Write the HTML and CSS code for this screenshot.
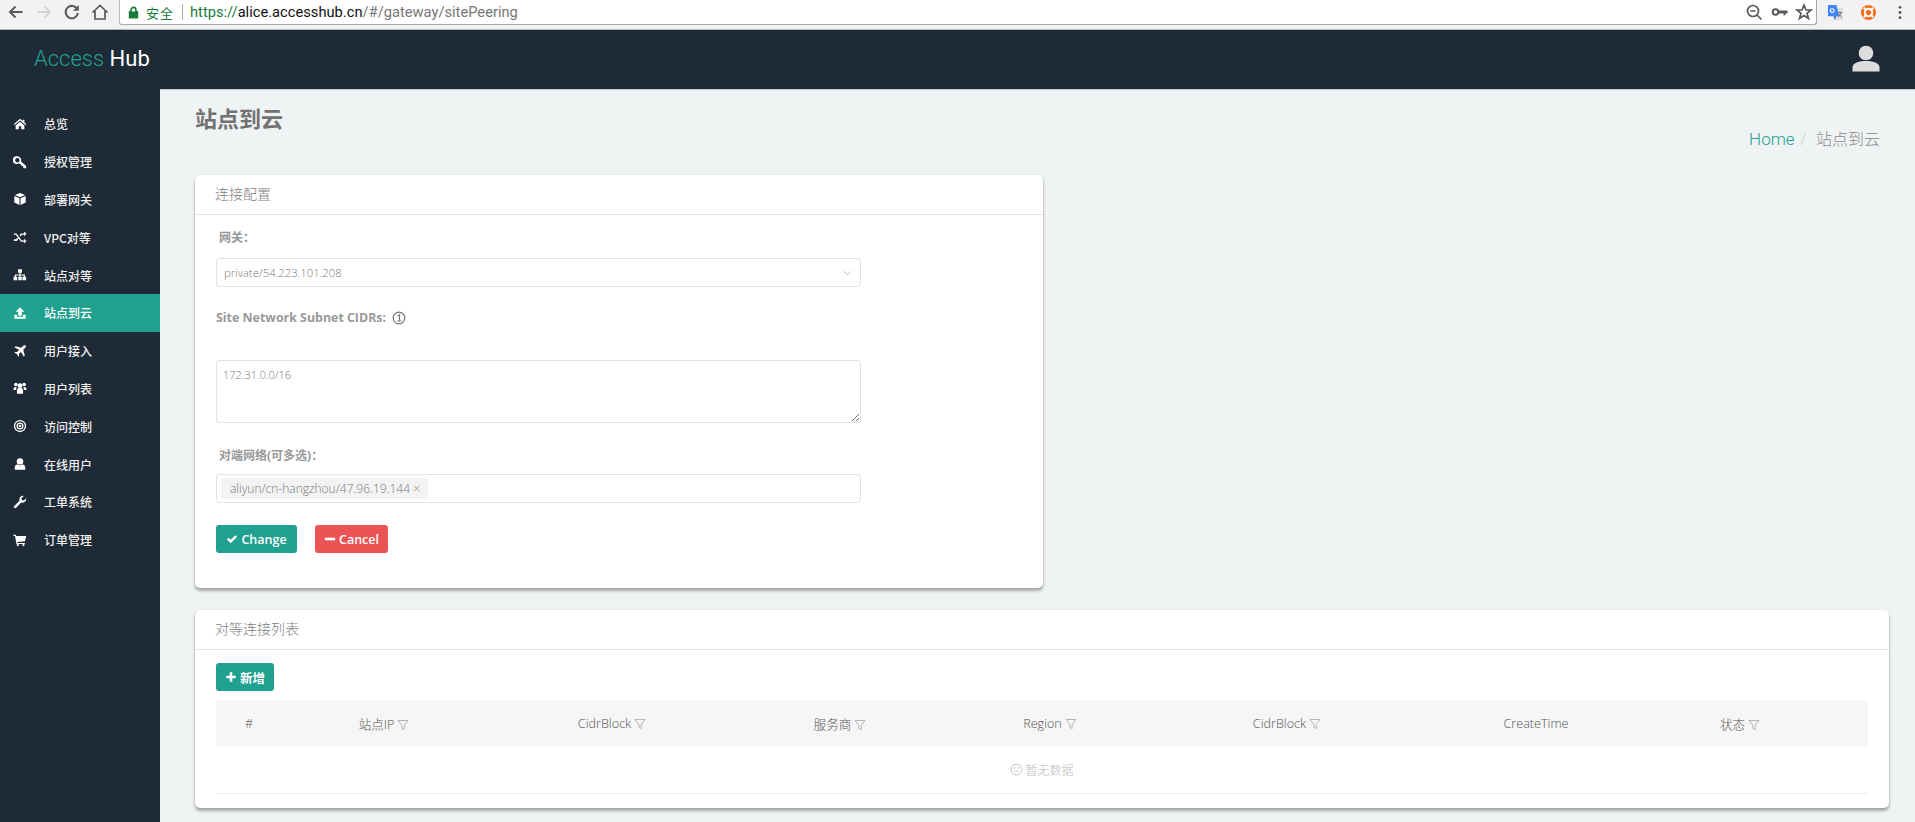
FILE: index.html
```html
<!DOCTYPE html>
<html lang="zh-CN">
<head>
<meta charset="utf-8">
<title>Access Hub</title>
<link rel="stylesheet" href="styles.css">
</head>
<body>
<svg class="defs" width="0" height="0">
  <defs>
    <symbol id="i-home" viewBox="0 0 16 16"><path d="M8 2 0.8 8.2l1 1L8 4l6.200 5.200 1-1L13 6.300V3h-2v1.600zM3 9.600V14h3.600v-3.400h2.800V14H13V9.600L8 5.300z"/></symbol>
    <symbol id="i-key" viewBox="0 0 16 16"><path fill-rule="evenodd" d="M5 1.500a4.500 4.500 0 0 1 4.200 5.800l5.800 5.200V15h-2.500l-1-1v-1.300h-1.300L9 11.500V10.300H7.800L6.800 9.400A4.500 4.500 0 1 1 5 1.500zM5 3.500a2.500 2.500 0 1 0 0 5 2.500 2.500 0 0 0 0-5z"/></symbol>
    <symbol id="i-cube" viewBox="0 0 16 16"><path d="M8 1.200 13.800 3.500 8 5.900 2.200 3.500zM1.500 4.700 7.400 7.100V14.800L1.500 12zM14.500 4.700 8.600 7.100V14.800L14.500 12z"/></symbol>
    <symbol id="i-random" viewBox="0 0 16 16"><path d="M1 4h3l6 8h2.500v-2l3 2.700-3 2.700v-2H9.200l-6-8H1zM1 10.500h2.500l1.600-2 1.200 1.500L4.300 12.500H1zM9.200 4h3.300V1.700l3 2.700-3 2.700V5.500h-2.500L8.600 7.300 7.500 5.800z"/></symbol>
    <symbol id="i-sitemap" viewBox="0 0 16 16"><path d="M5.800 1.500h4.400v4H8.600v1.800h5v2.700h1.400v4h-4.200v-4h1.400V8.500H8.600V10H10v4H6v-4h1.400V8.500H3.400V10h1.400v4H.6v-4H2V7.300h5.400V5.500H5.800z"/></symbol>
    <symbol id="i-upload" viewBox="0 0 16 16"><path d="M8 1.500 13 6.500H10v4.500H6V6.500H3zM1.500 10h3v2.300h7V10h3v4.500h-13z"/></symbol>
    <symbol id="i-plane" viewBox="0 0 16 16"><path d="M14.500 1.500c-1-.5-2.200 0-3 .8L9.500 4.300 3 2.500 1.700 3.800 7 6.800 4.600 9.200 2.500 9 1.500 10l3 1.500L6 14.500l1-1-.2-2.100 2.400-2.400 3 5.300 1.300-1.300-1.800-6.500 2-2c.8-.8 1.300-2 .8-3z"/></symbol>
    <symbol id="i-users" viewBox="0 0 16 16"><circle cx="3.300" cy="4" r="2"/><circle cx="12.700" cy="4" r="2"/><circle cx="8" cy="5.500" r="2.800"/><path d="M.5 10c0-2 .8-3.200 2.500-3.200l1.300.5c-.5.700-.7 1.700-.7 3H.5zM15.500 10c0-2-.8-3.200-2.500-3.200l-1.300.5c.5.700.7 1.700.7 3h3.100zM4.500 14.500v-3c0-2 1-3.500 2-3.500h3c1 0 2 1.500 2 3.500v3z"/></symbol>
    <symbol id="i-bullseye" viewBox="0 0 16 16"><path fill-rule="evenodd" d="M8 1a7 7 0 1 1 0 14A7 7 0 0 1 8 1zm0 1.500a5.500 5.500 0 1 0 0 11 5.500 5.500 0 0 0 0-11zM8 4a4 4 0 1 1 0 8 4 4 0 0 1 0-8zm0 1.500a2.500 2.500 0 1 0 0 5 2.500 2.500 0 0 0 0-5zM8 6.500a1.500 1.500 0 1 1 0 3 1.500 1.500 0 0 1 0-3z"/></symbol>
    <symbol id="i-user" viewBox="0 0 16 16"><circle cx="8" cy="5" r="3.700"/><path d="M2 14.500v-2.300c0-2 1-3.500 3-3.700 1.800 1.200 4.200 1.200 6 0 2 .2 3 1.700 3 3.700v2.300z"/></symbol>
    <symbol id="i-wrench" viewBox="0 0 16 16"><path d="M15 3.800a4.300 4.300 0 0 1-5.600 4.700L3.600 14.600a1.500 1.500 0 0 1-2.200-2.100l6-6A4.300 4.300 0 0 1 12.300 1L9.700 3.600 10.200 5.800 12.400 6.300z"/></symbol>
    <symbol id="i-cart" viewBox="0 0 16 16"><path d="M.5 2h2.800l.4 1.500H15l-1.300 5.800L5 10.300l.2 1h8.300v1.300H4L2.300 3.400H.5z"/><circle cx="5.500" cy="13.800" r="1.300"/><circle cx="12" cy="13.800" r="1.300"/></symbol>
    <symbol id="i-filter" viewBox="0 0 12 12"><path d="M1 1.500h10L7.200 6.300V10.500L4.800 9.300V6.300z" fill="none" stroke="currentColor" stroke-width="1"/></symbol>
  </defs>
</svg>

<header class="chrome">
  <div class="nav-btns">
    <svg class="ci" viewBox="0 0 18 18"><path class="st dark" d="M15.500 9H3.500M8.500 3.500 3 9l5.500 5.500"/></svg>
    <svg class="ci" viewBox="0 0 18 18"><path class="st faint" d="M2.500 9h12M9.500 3.500 15 9l-5.500 5.500"/></svg>
    <svg class="ci" viewBox="0 0 18 18"><path class="st dark" d="M14.500 6.500A6.200 6.200 0 1 0 15 10"/><path class="dark-f" d="M15.800 2v5.800H10z"/></svg>
    <svg class="ci" viewBox="0 0 18 18"><path class="st dark thin" d="M1.500 9.500 9 2.500l7.500 7M4 8v8h10V8"/></svg>
  </div>
  <div class="omnibox">
    <svg class="lock" viewBox="0 0 12 14"><path d="M1.500 6h9v7h-9zM3.200 6V4a2.800 2.800 0 0 1 5.600 0v2" fill="#1a7d3c" stroke="#1a7d3c" stroke-width="1.300"/><path d="M4.300 6V4a1.700 1.700 0 0 1 3.400 0v2z" fill="#fff"/></svg>
    <span class="secure">安全</span>
    <span class="omni-sep"></span>
    <span class="url"><span class="url-s">https://</span><span class="url-h">alice.accesshub.cn</span><span class="url-p">/#/gateway/sitePeering</span></span>
    <div class="omni-right">
      <svg class="ci" viewBox="0 0 18 18"><circle class="st dark thin" cx="8" cy="8" r="5.500"/><path class="st dark thin" d="M12 12l4.500 4.500M5.300 8h5.400"/></svg>
      <svg class="ci" viewBox="0 0 18 18"><circle class="st dark" cx="5.500" cy="9" r="2.800"/><path class="dark-f" d="M8 7.500h9.500v3h-2v1.800h-2v-1.800H8z"/></svg>
      <svg class="ci" viewBox="0 0 18 18"><path class="st dark thin" d="M9 2.200 11 7h5l-4 3.300 1.500 5.200L9 12.600l-4.500 2.900L6 10.300 2 7h5z"/></svg>
    </div>
  </div>
  <div class="ext">
    <svg class="ext-i" viewBox="0 0 18 18"><path d="M7 4h10v13H7z" fill="#ddd"/><path d="M1 1h9l3 12H1z" fill="#4285f4"/><path d="M7 13l3 0-1.800 4z" fill="#3367d6"/><circle cx="5.500" cy="7" r="2" fill="none" stroke="#fff" stroke-width="1.200"/><path d="M11 9h5M13.500 8v1M12 14l3-5M12.500 10l3 4" stroke="#777" fill="none"/></svg>
    <svg class="ext-i" viewBox="0 0 18 18"><circle cx="9" cy="9" r="8" fill="#f26f21"/><circle cx="9" cy="9" r="4" fill="none" stroke="#fff" stroke-width="2"/><path d="M4 4l3 3M14 4l-3 3M4 14l3-3M14 14l-3-3" stroke="#fff" stroke-width="2"/></svg>
    <svg class="dots" viewBox="0 0 4 16"><circle cx="2" cy="2.500" r="1.500"/><circle cx="2" cy="8" r="1.500"/><circle cx="2" cy="13.500" r="1.500"/></svg>
  </div>
</header>

<header class="topbar">
  <div class="logo"><span class="logo-a">Access</span> <span class="logo-b">Hub</span></div>
  <svg class="avatar" viewBox="0 0 28 26"><circle cx="14" cy="7.500" r="7.300"/><path d="M.5 26v-4c0-4 5-6.500 13.500-6.500S27.500 18 27.500 22v4z"/></svg>
</header>

<div class="shell">
  <nav class="side">
    <a class="side-item"><svg class="si"><use href="#i-home"/></svg><span>总览</span></a>
    <a class="side-item"><svg class="si"><use href="#i-key"/></svg><span>授权管理</span></a>
    <a class="side-item"><svg class="si"><use href="#i-cube"/></svg><span>部署网关</span></a>
    <a class="side-item"><svg class="si"><use href="#i-random"/></svg><span>VPC对等</span></a>
    <a class="side-item"><svg class="si"><use href="#i-sitemap"/></svg><span>站点对等</span></a>
    <a class="side-item active"><svg class="si"><use href="#i-upload"/></svg><span>站点到云</span></a>
    <a class="side-item"><svg class="si"><use href="#i-plane"/></svg><span>用户接入</span></a>
    <a class="side-item"><svg class="si"><use href="#i-users"/></svg><span>用户列表</span></a>
    <a class="side-item"><svg class="si"><use href="#i-bullseye"/></svg><span>访问控制</span></a>
    <a class="side-item"><svg class="si"><use href="#i-user"/></svg><span>在线用户</span></a>
    <a class="side-item"><svg class="si"><use href="#i-wrench"/></svg><span>工单系统</span></a>
    <a class="side-item"><svg class="si"><use href="#i-cart"/></svg><span>订单管理</span></a>
  </nav>

  <main class="main">
    <div class="page-head">
      <h1 class="title">站点到云</h1>
      <div class="crumbs"><a class="crumb-home">Home</a><span class="crumb-sep">/</span><span class="crumb-cur">站点到云</span></div>
    </div>

    <section class="card card-form">
      <div class="card-head">连接配置</div>
      <div class="card-body form-body">
        <div class="label label-a">网关：</div>
        <div class="field select">
          <span>private/54.223.101.208</span>
          <svg class="chev" viewBox="0 0 10 6"><path d="M1 1l4 4 4-4" fill="none" stroke="#bbb"/></svg>
        </div>
        <div class="label label-b">Site Network Subnet CIDRs:
          <svg class="info" viewBox="0 0 14 14"><circle cx="7" cy="7" r="5.800" fill="none" stroke="#777" stroke-width="1.200"/><path d="M5.700 4.700 7.500 3.800V10M5.500 10h4" fill="none" stroke="#777" stroke-width="1.200"/></svg>
        </div>
        <textarea class="field area" readonly>172.31.0.0/16</textarea>
        <div class="label label-c">对端网络(可多选)：</div>
        <div class="field multi"><span class="tag">aliyun/cn-hangzhou/47.96.19.144 <span class="tag-x">×</span></span></div>
        <div class="actions">
          <button class="btn btn-teal btn-change"><svg class="bi" viewBox="0 0 14 14"><path d="M1 7.500 3 5.500l2.500 2.500 5.500-5.500 2 2-7.500 7.500z"/></svg>Change</button>
          <button class="btn btn-red"><svg class="bi" viewBox="0 0 14 14"><path d="M1 5.500h12v3H1z"/></svg>Cancel</button>
        </div>
      </div>
    </section>

    <section class="card card-list">
      <div class="card-head">对等连接列表</div>
      <div class="card-body list-body">
        <button class="btn btn-teal btn-add"><svg class="bi" viewBox="0 0 14 14"><path d="M5.500 1.500h3v4h4v3h-4v4h-3v-4h-4v-3h4z"/></svg>新增</button>
        <div class="thead">
          <div>#</div>
          <div>站点IP<svg class="fi"><use href="#i-filter"/></svg></div>
          <div>CidrBlock<svg class="fi"><use href="#i-filter"/></svg></div>
          <div>服务商<svg class="fi"><use href="#i-filter"/></svg></div>
          <div>Region<svg class="fi"><use href="#i-filter"/></svg></div>
          <div>CidrBlock<svg class="fi"><use href="#i-filter"/></svg></div>
          <div>CreateTime</div>
          <div>状态<svg class="fi"><use href="#i-filter"/></svg></div>
          <div></div>
        </div>
        <div class="empty">
          <svg class="sad" viewBox="0 0 14 14"><circle cx="7" cy="7" r="5.800" fill="none" stroke="#bbb"/><circle cx="5" cy="5.500" r=".8" fill="#bbb"/><circle cx="9" cy="5.500" r=".8" fill="#bbb"/><path d="M4.800 9.800a2.500 2.500 0 0 1 4.400 0" fill="none" stroke="#bbb"/></svg>暂无数据
        </div>
      </div>
    </section>
  </main>
</div>
</body>
</html>
```

FILE: styles.css
```css
* { box-sizing: border-box; }
html, body { margin: 0; height: 100%; overflow: hidden; }
body {
  display: flex;
  flex-direction: column;
  background: #eff3f4;
  font-family: "Open Sans", "Noto Sans CJK SC", sans-serif;
  font-size: 12px;
  color: #777;
}
.defs { position: absolute; }

/* browser chrome */
.chrome {
  height: 30px;
  display: flex;
  background: #f2f2f2;
  border-bottom: 1px solid #b4b4b4;
  flex: none;
}
.nav-btns {
  width: 119px;
  display: flex;
  gap: 10px;
  padding: 3px 0 0 7px;
}
.ci { width: 18px; height: 18px; flex: none; }
.st { fill: none; stroke-width: 2; }
.dark { stroke: #5a5a5a; }
.thin { stroke-width: 1.700; }
.faint { stroke: #d4d4d4; }
.dark-f { fill: #5a5a5a; }
.omnibox {
  width: 1698px;
  height: 25px;
  background: #fff;
  border: 1px solid #a9a9a9;
  border-top: 0;
  border-left-color: #bbb;
  border-radius: 0 0 3px 3px;
  display: flex;
  align-items: center;
  padding-left: 8px;
}
.lock { width: 11px; height: 13px; }
.secure {
  margin-left: 7px;
  font-size: 13px;
  letter-spacing: 1px;
  color: #1a7d3c;
}
.omni-sep { width: 1px; height: 16px; background: #aaa; margin: 0 7px 0 8px; }
.url { font-family: Roboto, sans-serif; font-size: 14.700px; }
.url-s { color: #1a7d3c; }
.url-h { color: #111; }
.url-p { color: #777; }
.omni-right {
  margin-left: auto;
  display: flex;
  gap: 7px;
  padding-right: 3px;
}
.ext {
  flex: 1;
  display: flex;
  align-items: center;
  padding: 0 0 5px 10px;
}
.ext-i { width: 17px; height: 17px; margin-right: 15px; }
.ext-i + .ext-i { margin-left: 1px; margin-right: 21px; }
.dots { width: 4px; height: 15px; fill: #5a5a5a; }

/* top bar */
.topbar {
  height: 59px;
  flex: none;
  background: #1e2b37;
  display: flex;
  align-items: center;
  justify-content: space-between;
  padding: 0 35px 2px 34px;
}
.logo { font-family: Roboto, sans-serif; font-size: 22px; }
.logo-a { color: #20a08f; font-weight: 300; }
.logo-b { color: #fff; }
.avatar { width: 28px; height: 27px; fill: #ddd; }

/* layout */
.shell { flex: 1; display: flex; min-height: 0; }
.side {
  width: 160px;
  flex: none;
  background: #1e2b37;
  padding-top: 16px;
}
.side-item {
  height: 37.800px;
  display: flex;
  align-items: center;
  color: #eee;
  font-family: "Noto Sans CJK SC", "Open Sans", sans-serif;
  font-weight: 500;
  padding-left: 13px;
}
.side-item.active { background: #20a08f; color: #fff; }
.si { width: 14px; height: 14px; fill: #fff; margin-right: 17px; flex: none; }

.main { flex: 1; min-width: 0; padding: 0 26px 0 35px; border-top: 1px solid #c9cdd0; }
.page-head {
  height: 85px;
  display: flex;
  justify-content: space-between;
  align-items: flex-start;
}
.title {
  margin: 13px 0 0;
  font-size: 22px;
  line-height: 30px;
  font-weight: 700;
  color: #727272;
}
.crumbs {
  margin: 37px 9px 0 0;
  display: flex;
  align-items: center;
  line-height: 24px;
  font-size: 16px;
  color: #8a8a8a;
  font-weight: 300;
}
.crumb-home { font-family: Roboto, sans-serif; font-size: 17px; font-weight: 300; color: #20a08f; }
.crumb-sep { margin: 0 10px 0 6px; color: #ccc; }

/* cards */
.card {
  background: #fff;
  border-radius: 5px;
  box-shadow: 0 3px 3px rgba(0, 0, 0, .3), -1px 0 2px rgba(0, 0, 0, .06), 1px 0 2px rgba(0, 0, 0, .06);
}
.card-form { width: 848px; }
.card-list { margin-top: 22px; }
.card-head {
  height: 40px;
  border-bottom: 1px solid #e2e2e2;
  padding-left: 20px;
  font-size: 14px;
  line-height: 38px;
  color: #808080;
  font-weight: 300;
}
.card-body { padding: 0 21px; }
.form-body { padding-bottom: 35px; }
.list-body { padding-bottom: 14px; }

.label {
  line-height: 20px;
  font-weight: 600;
  color: #999;
  display: flex;
  align-items: center;
}
.label-a { margin: 13px 0 10px 3px; }
.label-b { margin: 21px 0 32px; font-size: 12.400px; font-weight: 700; }
.label-c { margin: 23px 0 8px 3px; font-weight: 700; }
.info { width: 14px; height: 14px; margin-left: 6px; }

.field {
  display: block;
  width: 645px;
  background: #fff;
  border: 1px solid #e2e2e2;
  border-radius: 3px;
  font-family: "Open Sans", sans-serif;
  font-size: 12px;
  font-weight: 300;
  color: #777;
}
.select {
  height: 29px;
  display: flex;
  align-items: center;
  justify-content: space-between;
  padding: 0 8px 0 7px;
  font-size: 11.300px;
}
.chev { width: 9px; height: 6px; }
.area {
  height: 63px;
  padding: 5px 6px;
  margin: 0;
  outline: 0;
  line-height: 17px;
  resize: vertical;
  font-size: 11px;
}
.multi {
  height: 29px;
  display: flex;
  align-items: center;
  padding-left: 4px;
}
.tag {
  height: 21px;
  line-height: 21px;
  background: #f3f3f3;
  border-radius: 3px;
  padding: 0 8px 0 9px;
}
.tag-x { color: #888; }

.actions { display: flex; gap: 18px; margin-top: 22px; }
.btn {
  height: 28px;
  border: 0;
  border-radius: 3px;
  color: #fff;
  font-family: "Open Sans", "Noto Sans CJK SC", sans-serif;
  font-size: 12.500px;
  font-weight: 600;
  display: flex;
  align-items: center;
  justify-content: center;
  padding: 0;
}
.btn-teal { background: #20a08f; }
.btn-red { background: #ea5455; width: 73px; }
.btn-change { width: 81px; }
.btn-add { width: 58px; margin-top: 13px; }
.bi { width: 12px; height: 12px; fill: #fff; margin-right: 3px; }

/* table */
.thead {
  margin-top: 9px;
  height: 46px;
  width: 100%;
  background: #f6f6f6;
  border-radius: 3px 3px 0 0;
  display: grid;
  grid-template-columns: 66px 204px 252px 204px 216px 258px 240px 168px 1fr;
  align-items: center;
  text-align: center;
  color: #555;
  font-size: 12.600px;
  font-weight: 300;
}
.fi { width: 12px; height: 12px; color: #b5b5b5; margin-left: 3px; vertical-align: -2px; }
.empty {
  height: 48px;
  border-bottom: 1px solid #eee;
  display: flex;
  align-items: center;
  justify-content: center;
  color: #bbb;
  font-weight: 300;
}
.sad { width: 13px; height: 13px; margin-right: 2px; }
```
